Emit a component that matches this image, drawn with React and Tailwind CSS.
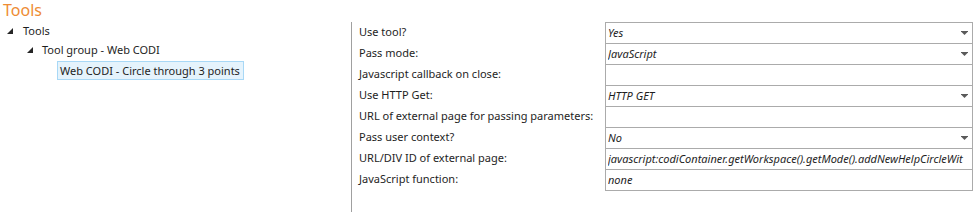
import React from "react";

const Tri = () => (
  <svg width="6" height="6" viewBox="0 0 6 6" className="shrink-0">
    <polygon points="6,0 6,6 0,6" fill="#262626" />
  </svg>
);

const Arrow = () => (
  <svg width="7" height="4" viewBox="0 0 7 4" className="shrink-0">
    <rect x="0" y="0" width="7" height="1" fill="#5a5a5a" />
    <polygon points="0.5,1 6.5,1 3.5,4" fill="#5a5a5a" />
  </svg>
);

const rows = [
  { label: "Use tool?", value: "Yes", dd: true },
  { label: "Pass mode:", value: "JavaScript", dd: true },
  { label: "Javascript callback on close:", value: "", dd: false },
  { label: "Use HTTP Get:", value: "HTTP GET", dd: true },
  { label: "URL of external page for passing parameters:", value: "", dd: false },
  { label: "Pass user context?", value: "No", dd: true },
  {
    label: "URL/DIV ID of external page:",
    value: "javascript:codiContainer.getWorkspace().getMode().addNewHelpCircleWit",
    dd: false,
  },
  { label: "JavaScript function:", value: "none", dd: false },
];

export default function App() {
  return (
    <div className="w-[976px] h-[212px] bg-white flex text-[11px] text-[#1e1e1e] font-['Noto_Sans','Open_Sans',sans-serif] overflow-hidden">
      <div className="w-[351px] shrink-0 flex flex-col">
        <div className="h-[22px] pl-[3px] text-[16px] leading-[20px] text-[#ee8c34]">Tools</div>
        <div className="h-[18px] flex items-center pl-[7px]">
          <Tri />
          <span className="ml-[10px] leading-[18px]">Tools</span>
        </div>
        <div className="h-[20px] flex items-center pl-[27px]">
          <Tri />
          <span className="ml-[9px] leading-[20px]">Tool group - Web CODI</span>
        </div>
        <div className="pl-[57px] pt-[1px] flex">
          <div className="h-[19px] border border-[#a8d8f6] bg-[#e5f3fc] pl-[2px] pr-[3px] flex items-center leading-[17px]">
            Web CODI - Circle through 3 points
          </div>
        </div>
      </div>
      <div className="mt-[22px] w-px bg-[#a0a0a0] shrink-0" />
      <div className="pl-[7px] pt-[22px] flex">
        <div className="w-[246px] flex flex-col">
          {rows.map((r) => (
            <div key={r.label} className="h-[21px] flex items-center whitespace-nowrap">
              {r.label}
            </div>
          ))}
        </div>
        <div className="w-[368px] flex flex-col border-t border-[#ababab]">
          {rows.map((r) => (
            <div
              key={r.label}
              className="h-[21px] border-x border-b border-[#ababab] flex items-center pl-[2px] pr-[4px] italic"
            >
              <span className="flex-1 overflow-hidden whitespace-nowrap">{r.value}</span>
              {r.dd && <Arrow />}
            </div>
          ))}
        </div>
      </div>
    </div>
  );
}
